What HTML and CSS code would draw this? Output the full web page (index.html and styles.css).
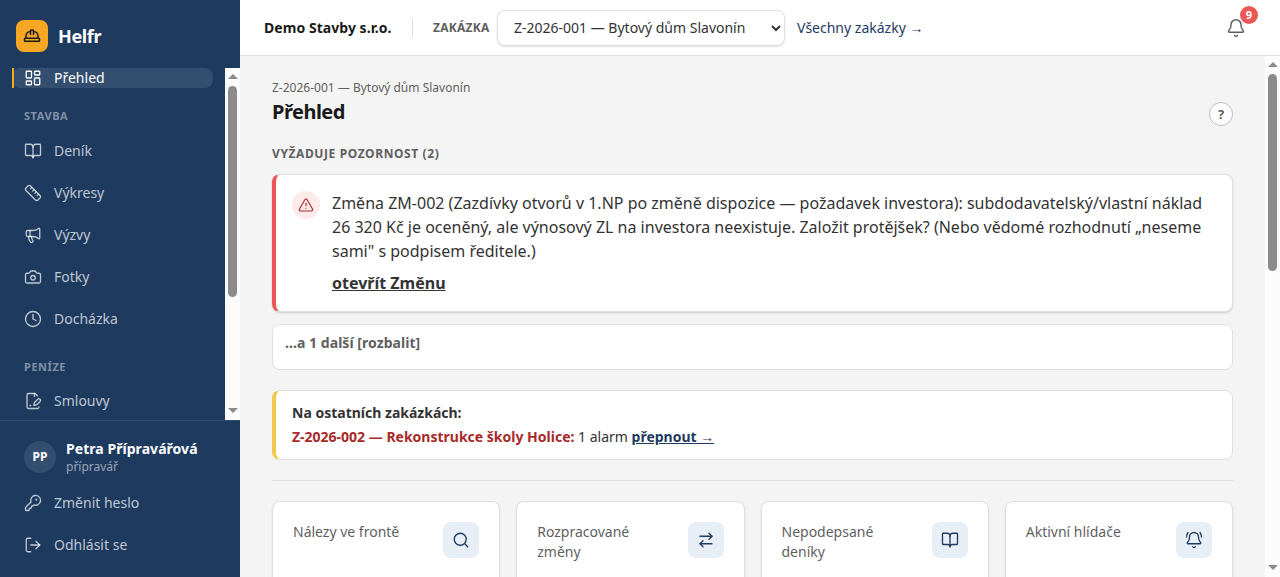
FILE: index.html
```html
<!DOCTYPE html>
<html lang="cs">
<head>
<meta charset="utf-8">
<title>Helfr</title>
<link rel="stylesheet" href="styles.css">
</head>
<body>
<svg class="sprite" width="0" height="0">
  <symbol id="book" viewBox="0 0 24 24"><path d="M12 7v14"/><path d="M3 18a1 1 0 0 1-1-1V4a1 1 0 0 1 1-1h5a4 4 0 0 1 4 4 4 4 0 0 1 4-4h5a1 1 0 0 1 1 1v13a1 1 0 0 1-1 1h-6a3 3 0 0 0-3 3 3 3 0 0 0-3-3z"/></symbol>
</svg>
<div class="app">
  <aside class="sidebar">
    <div class="brand">
      <span class="logo"><svg viewBox="0 0 24 24"><path d="M10 10V5a1 1 0 0 1 1-1h2a1 1 0 0 1 1 1v5"/><path d="M14 6a6 6 0 0 1 6 6v3"/><path d="M4 15v-3a6 6 0 0 1 6-6"/><rect x="2" y="15" width="20" height="4" rx="1"/></svg></span>
      <span class="brand-name">Helfr</span>
    </div>
    <div class="nav-wrap">
      <nav class="nav">
        <a class="item active"><svg viewBox="0 0 24 24"><rect width="7" height="9" x="3" y="3" rx="1"/><rect width="7" height="5" x="14" y="3" rx="1"/><rect width="7" height="9" x="14" y="12" rx="1"/><rect width="7" height="5" x="3" y="16" rx="1"/></svg>Přehled</a>
        <div class="group first">Stavba</div>
        <a class="item"><svg><use href="#book"/></svg>Deník</a>
        <a class="item"><svg viewBox="0 0 24 24"><path d="M21.3 15.3a2.4 2.4 0 0 1 0 3.4l-2.6 2.6a2.4 2.4 0 0 1-3.4 0L2.7 8.7a2.41 2.41 0 0 1 0-3.4l2.6-2.6a2.41 2.41 0 0 1 3.4 0Z"/><path d="m14.5 12.5 2-2"/><path d="m11.5 9.5 2-2"/><path d="m8.5 6.5 2-2"/><path d="m17.5 15.5 2-2"/></svg>Výkresy</a>
        <a class="item"><svg viewBox="0 0 24 24"><path d="M11 6a13 13 0 0 0 8.4-2.8A1 1 0 0 1 21 4v12a1 1 0 0 1-1.6.8A13 13 0 0 0 11 14H5a2 2 0 0 1-2-2V8a2 2 0 0 1 2-2z"/><path d="M6 14a12 12 0 0 0 2.4 7.2 2 2 0 0 0 3.2-2.4A8 8 0 0 1 10 14"/><path d="M8 6v8"/></svg>Výzvy</a>
        <a class="item"><svg viewBox="0 0 24 24"><path d="M13.997 4a2 2 0 0 1 1.76 1.05l.486.9A2 2 0 0 0 18.003 7H20a2 2 0 0 1 2 2v9a2 2 0 0 1-2 2H4a2 2 0 0 1-2-2V9a2 2 0 0 1 2-2h1.997a2 2 0 0 0 1.759-1.048l.489-.904A2 2 0 0 1 10.004 4z"/><circle cx="12" cy="13" r="3"/></svg>Fotky</a>
        <a class="item"><svg viewBox="0 0 24 24"><circle cx="12" cy="12" r="10"/><path d="M12 6v6l4 2"/></svg>Docházka</a>
        <div class="group">Peníze</div>
        <a class="item"><svg viewBox="0 0 24 24"><path d="m18 5-2.414-2.414A2 2 0 0 0 14.172 2H6a2 2 0 0 0-2 2v16a2 2 0 0 0 2 2h12a2 2 0 0 0 2-2"/><path d="M14 2v4"/><path d="M21.378 12.626a1 1 0 0 0-3.004-3.004l-4.01 4.012a2 2 0 0 0-.506.854l-.837 2.87a.5.5 0 0 0 .62.62l2.87-.837a2 2 0 0 0 .854-.506z"/><path d="M8 18h1"/></svg>Smlouvy</a>
      </nav>
      <div class="scrollbar"><i class="up"></i><i class="thumb nav-thumb"></i><i class="down"></i></div>
    </div>
    <div class="account">
      <div class="user">
        <span class="avatar">PP</span>
        <div><div class="user-name">Petra Přípravářová</div><div class="user-role">přípravář</div></div>
      </div>
      <a class="item"><svg viewBox="0 0 24 24"><path d="M2.586 17.414A2 2 0 0 0 2 18.828V21a1 1 0 0 0 1 1h3a1 1 0 0 0 1-1v-1a1 1 0 0 1 1-1h1a1 1 0 0 0 1-1v-1a1 1 0 0 1 1-1h.172a2 2 0 0 0 1.414-.586l.814-.814a6.5 6.5 0 1 0-4-4z"/><circle cx="16.5" cy="7.5" r=".5" fill="currentColor"/></svg>Změnit heslo</a>
      <a class="item"><svg viewBox="0 0 24 24"><path d="M9 21H5a2 2 0 0 1-2-2V5a2 2 0 0 1 2-2h4"/><path d="m16 17 5-5-5-5"/><path d="M21 12H9"/></svg>Odhlásit se</a>
    </div>
  </aside>
  <div class="page">
    <header class="topbar">
      <strong class="company">Demo Stavby s.r.o.</strong>
      <span class="divider"></span>
      <label class="order-label" for="order">Zakázka</label>
      <select class="order" id="order"><option>Z-2026-001 — Bytový dům Slavonín</option></select>
      <a class="all-orders">Všechny zakázky →</a>
      <span class="bell"><svg viewBox="0 0 24 24"><path d="M10.268 21a2 2 0 0 0 3.464 0"/><path d="M3.262 15.326A1 1 0 0 0 4 17h16a1 1 0 0 0 .74-1.673C19.41 13.956 18 12.499 18 8A6 6 0 0 0 6 8c0 4.499-1.411 5.956-2.738 7.326"/></svg><b class="badge">9</b></span>
    </header>
    <div class="body">
      <main class="content">
        <div class="heading">
          <div><div class="crumb">Z-2026-001 — Bytový dům Slavonín</div><h1>Přehled</h1></div>
          <span class="help">?</span>
        </div>
        <h2>Vyžaduje pozornost (2)</h2>
        <section class="card alert">
          <span class="alert-icon"><svg viewBox="0 0 24 24"><path d="m21.73 18-8-14a2 2 0 0 0-3.48 0l-8 14A2 2 0 0 0 4 21h16a2 2 0 0 0 1.73-3"/><path d="M12 9v4"/><path d="M12 17h.01"/></svg></span>
          <div class="alert-text">
            <p>Změna ZM-002 (Zazdívky otvorů v 1.NP po změně dispozice — požadavek investora): subdodavatelský/vlastní náklad 26 320 Kč je oceněný, ale výnosový ZL na investora neexistuje. Založit protějšek? (Nebo vědomé rozhodnutí „neseme sami" s podpisem ředitele.)</p>
            <a class="open">otevřít Změnu</a>
          </div>
        </section>
        <section class="card more">…a 1 další [rozbalit]</section>
        <section class="card others">
          <strong>Na ostatních zakázkách:</strong>
          <div><strong class="late">Z-2026-002 — Rekonstrukce školy Holice:</strong> 1 alarm <a class="switch">přepnout →</a></div>
        </section>
        <div class="tiles">
          <div class="card tile"><span>Nálezy ve frontě</span><i><svg viewBox="0 0 24 24"><path d="m21 21-4.34-4.34"/><circle cx="11" cy="11" r="8"/></svg></i></div>
          <div class="card tile"><span>Rozpracované změny</span><i><svg viewBox="0 0 24 24"><path d="m16 3 4 4-4 4"/><path d="M20 7H4"/><path d="m8 21-4-4 4-4"/><path d="M4 17h16"/></svg></i></div>
          <div class="card tile"><span>Nepodepsané deníky</span><i><svg><use href="#book"/></svg></i></div>
          <div class="card tile"><span>Aktivní hlídače</span><i><svg viewBox="0 0 24 24"><path d="M10.268 21a2 2 0 0 0 3.464 0"/><path d="M22 8c0-2.3-.8-4.3-2-6"/><path d="M3.262 15.326A1 1 0 0 0 4 17h16a1 1 0 0 0 .74-1.673C19.41 13.956 18 12.499 18 8A6 6 0 0 0 6 8c0 4.499-1.411 5.956-2.738 7.326"/><path d="M4 2C2.8 3.7 2 5.7 2 8"/></svg></i></div>
        </div>
      </main>
      <div class="scrollbar"><i class="up"></i><i class="thumb page-thumb"></i><i class="down"></i></div>
    </div>
  </div>
</div>
</body>
</html>
```
FILE: styles.css
```css
* { box-sizing: border-box; }
body { margin: 0; overflow: hidden; font: 14px/20px "Noto Sans", sans-serif; color: #333; }
svg { width: 18px; height: 18px; flex: none; fill: none; stroke: currentColor; stroke-width: 1.75; stroke-linecap: round; stroke-linejoin: round; }
.sprite { display: none; }
h1, h2, p { margin: 0; }
.app { display: flex; height: 577px; }

.sidebar { width: 240px; flex: none; display: flex; flex-direction: column; background: #1e3a5f; color: rgba(255,255,255,.72); }
.brand { height: 68px; flex: none; display: flex; align-items: center; gap: 10px; padding: 4px 16px 0; }
.logo { width: 32px; height: 32px; border-radius: 8px; background: #f5a623; color: #1a1a1a; display: grid; place-items: center; }
.logo svg { stroke-width: 2; }
.brand-name { color: #fff; font-size: 18px; font-weight: 700; letter-spacing: -.36px; }
.nav-wrap { display: flex; flex: 1; min-height: 0; }
.nav { flex: 1; padding: 0 12px; overflow: hidden; }
.item { display: flex; align-items: center; gap: 12px; height: 42px; padding: 0 12px; }
.active { height: 20px; position: relative; border-radius: 8px; background: rgba(255,255,255,.1); color: #fff; }
.active::before { content: ""; position: absolute; left: 0; top: 0; bottom: 0; width: 2px; background: #f5a623; }
.group { height: 40px; padding: 17px 12px 0; font-size: 11px; font-weight: 700; letter-spacing: .55px; text-transform: uppercase; color: rgba(255,255,255,.45); }
.group.first { height: 42px; padding-top: 18px; }

.scrollbar { width: 15px; flex: none; display: flex; flex-direction: column; align-items: center; background: #fcfcfc; }
.up, .down { border: 5px solid transparent; }
.up { border-top-width: 0; border-bottom-color: #8b8b8b; margin-top: 6px; }
.down { margin: auto 0 7px; border-bottom-width: 0; border-top-color: #8b8b8b; }
.thumb { width: 9px; margin-top: 7px; border-radius: 5px; background: #8b8b8b; }
.nav-thumb { height: 211px; }
.page-thumb { height: 197px; }

.account { height: 157px; flex: none; padding: 10px 12px 0; border-top: 1px solid #334d6f; }
.user { display: flex; align-items: center; gap: 10px; height: 51px; padding: 1px 12px 0; }
.avatar { width: 32px; height: 32px; border-radius: 50%; background: rgba(255,255,255,.1); color: #fff; display: grid; place-items: center; font-size: 12px; font-weight: 700; }
.user-name { color: #fff; font-weight: 700; letter-spacing: .05px; line-height: 18px; }
.user-role { font-size: 12px; line-height: 17px; color: rgba(255,255,255,.55); }

.page { flex: 1; display: flex; flex-direction: column; min-width: 0; }
.topbar { height: 56px; flex: none; display: flex; align-items: center; padding: 0 34px 0 24px; border-bottom: 1px solid #e0e0e0; background: #fff; }
.company { width: 128px; white-space: nowrap; letter-spacing: .05px; color: #1a1a1a; }
.divider { width: 1px; height: 20px; margin: 0 20px; background: #e0e0e0; }
.order-label { width: 56px; font-size: 12px; font-weight: 700; letter-spacing: .24px; text-transform: uppercase; color: #5f5f5f; margin-right: 8px; }
.order { width: 288px; height: 36px; padding: 0 12px; border: 1px solid #e0e0e0; border-radius: 8px; background: #fff; color: #333; font: 14px "Noto Sans", sans-serif; box-shadow: 0 1px 2px rgba(0,0,0,.12); }
.all-orders { margin-left: 12px; color: #1e3a5f; }
.bell { margin-left: auto; position: relative; display: flex; color: #5f5f5f; }
.bell svg { width: 20px; height: 20px; }
.badge { position: absolute; left: 14px; top: -12px; width: 18px; height: 18px; border-radius: 50%; background: #eb5757; color: #fff; font-size: 11px; line-height: 18px; text-align: center; }

.body { flex: 1; display: flex; min-height: 0; background: #f4f4f4; }
.content { flex: 1; min-width: 0; padding: 23px 32px 0; overflow: hidden; }
.heading { display: flex; justify-content: space-between; align-items: flex-end; }
.crumb { font-size: 12px; line-height: 18px; color: #5f5f5f; }
h1 { font-size: 20px; line-height: 30px; letter-spacing: -.5px; color: #1a1a1a; }
.help { width: 24px; height: 24px; margin-bottom: 1px; border: 1px solid #bdbdbd; border-radius: 50%; background: #fff; color: #5f5f5f; display: grid; place-items: center; font-size: 13px; font-weight: 700; }
h2 { margin: 17px 0 10px; font-size: 12px; line-height: 20px; letter-spacing: .6px; text-transform: uppercase; color: #5f5f5f; }
.card { border: 1px solid #e0e0e0; border-radius: 8px; background: #fff; }
.alert { display: flex; gap: 12px; height: 138px; padding: 16px; border-left: 4px solid #eb5757; box-shadow: 0 1px 2px rgba(0,0,0,.16); }
.alert-icon { width: 28px; height: 28px; flex: none; border-radius: 50%; background: #fdeaea; color: #a82a2a; display: grid; place-items: center; }
.alert-icon svg { width: 16px; height: 16px; }
.alert-text { font-size: 16px; line-height: 24px; }
.open { display: block; margin-top: 8px; font-weight: 700; text-decoration: underline; }
.more { height: 46px; margin-top: 12px; padding: 8px 12px; font-weight: 700; letter-spacing: .04px; color: #5f5f5f; }
.others { height: 70px; margin-top: 20px; padding: 10px 16px; border-left: 4px solid #f2c94c; line-height: 24px; }
.late { color: #a82a2a; }
.switch { font-weight: 700; color: #1e3a5f; text-decoration: underline; }
.tiles { display: grid; grid-template-columns: repeat(4, 1fr); gap: 16px; margin-top: 20px; padding-top: 20px; border-top: 1px solid #e0e0e0; }
.tile { display: flex; justify-content: space-between; gap: 12px; height: 140px; padding: 20px; color: #5f5f5f; box-shadow: 0 1px 2px rgba(0,0,0,.12); }
.tile i { width: 36px; height: 36px; flex: none; border-radius: 8px; background: #e8eef6; color: #1e3a5f; display: grid; place-items: center; }
```
